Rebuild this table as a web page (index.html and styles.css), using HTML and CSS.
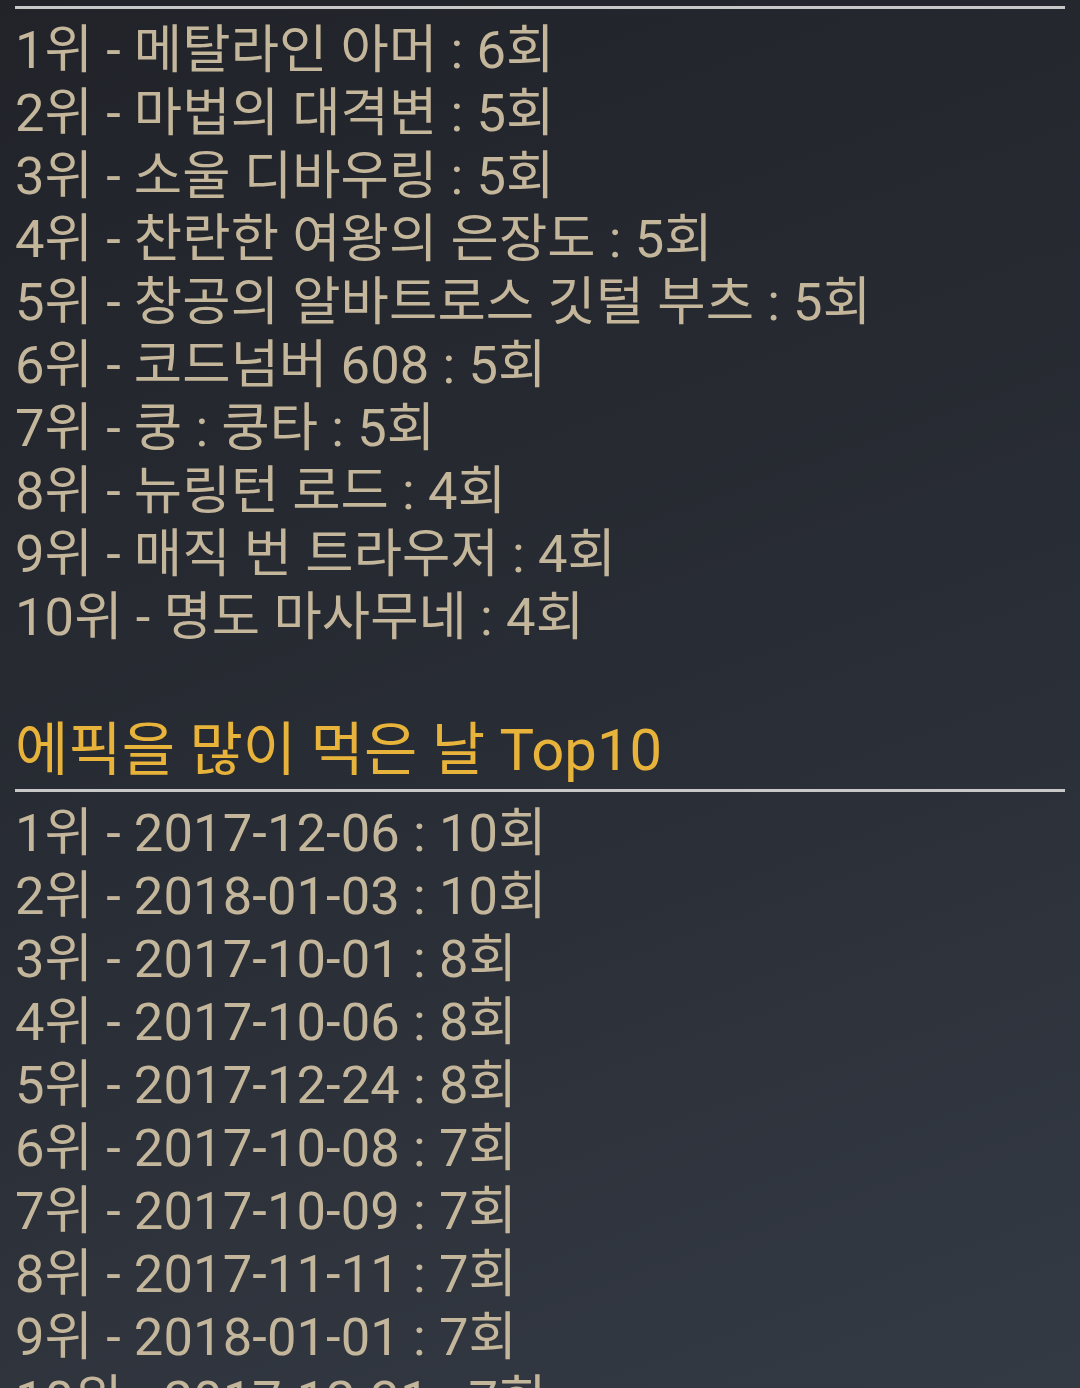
FILE: index.html
```html
<!DOCTYPE html>
<html>

<head>
  <title>에픽 통계</title>
  <link rel="stylesheet" href="styles.css">
</head>

<body>
  <section class="stats">
    <hr>
    <ul>
      <li>1위 - 메탈라인 아머 : 6회</li>
      <li>2위 - 마법의 대격변 : 5회</li>
      <li>3위 - 소울 디바우링 : 5회</li>
      <li>4위 - 찬란한 여왕의 은장도 : 5회</li>
      <li>5위 - 창공의 알바트로스 깃털 부츠 : 5회</li>
      <li>6위 - 코드넘버 608 : 5회</li>
      <li>7위 - 쿵 : 쿵타 : 5회</li>
      <li>8위 - 뉴링턴 로드 : 4회</li>
      <li>9위 - 매직 번 트라우저 : 4회</li>
      <li>10위 - 명도 마사무네 : 4회</li>
    </ul>
  </section>

  <section class="stats">
    <h2>에픽을 많이 먹은 날 Top10</h2>
    <hr>
    <ul>
      <li>1위 - 2017-12-06 : 10회</li>
      <li>2위 - 2018-01-03 : 10회</li>
      <li>3위 - 2017-10-01 : 8회</li>
      <li>4위 - 2017-10-06 : 8회</li>
      <li>5위 - 2017-12-24 : 8회</li>
      <li>6위 - 2017-10-08 : 7회</li>
      <li>7위 - 2017-10-09 : 7회</li>
      <li>8위 - 2017-11-11 : 7회</li>
      <li>9위 - 2018-01-01 : 7회</li>
      <li>10위 - 2017-12-31 : 7회</li>
    </ul>
  </section>
</body>

</html>
```

FILE: styles.css
```css
html {
  height: 100%;
  background: linear-gradient(160deg, #212329 0%, #282c34 50%, #343a44 100%);
  color: #c4b69b;
  font: 52.5px/63px Roboto, "Noto Sans CJK KR", sans-serif;
}

body {
  margin: 0;
  padding: 0 15px;
  overflow: hidden;
  height: 1388px;
}

hr {
  border: none;
  height: 3px;
  background-color: #c8c8c8;
  margin: 6px 0 10px;
}

h2 {
  color: #e8b33a;
  font-size: 58px;
  font-weight: normal;
  line-height: 66px;
  margin: 0;
  padding-top: 68px;
}

ul {
  list-style: none;
  margin: 0;
  padding: 0;
}

li {
  white-space: nowrap;
}

.stats li {
  letter-spacing: 0.1px;
}
```
